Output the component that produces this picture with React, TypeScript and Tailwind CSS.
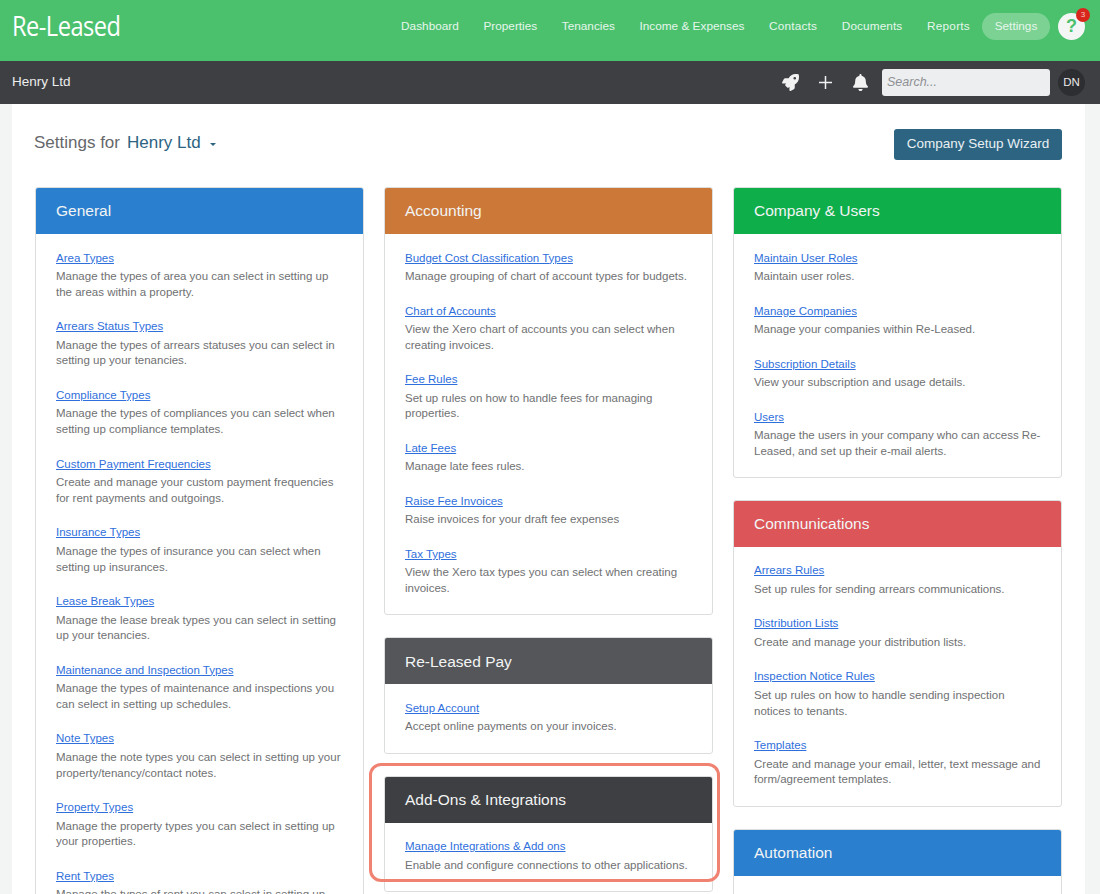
import React from "react";
import { FaRocket, FaBell } from "react-icons/fa";

type Item = [string, string];

const general: Item[] = [
  ["Area Types", "Manage the types of area you can select in setting up\nthe areas within a property."],
  ["Arrears Status Types", "Manage the types of arrears statuses you can select in\nsetting up your tenancies."],
  ["Compliance Types", "Manage the types of compliances you can select when\nsetting up compliance templates."],
  ["Custom Payment Frequencies", "Create and manage your custom payment frequencies\nfor rent payments and outgoings."],
  ["Insurance Types", "Manage the types of insurance you can select when\nsetting up insurances."],
  ["Lease Break Types", "Manage the lease break types you can select in setting\nup your tenancies."],
  ["Maintenance and Inspection Types", "Manage the types of maintenance and inspections you\ncan select in setting up schedules."],
  ["Note Types", "Manage the note types you can select in setting up your\nproperty/tenancy/contact notes."],
  ["Property Types", "Manage the property types you can select in setting up\nyour properties."],
  ["Rent Types", "Manage the types of rent you can select in setting up"],
];
const accounting: Item[] = [
  ["Budget Cost Classification Types", "Manage grouping of chart of account types for budgets."],
  ["Chart of Accounts", "View the Xero chart of accounts you can select when\ncreating invoices."],
  ["Fee Rules", "Set up rules on how to handle fees for managing\nproperties."],
  ["Late Fees", "Manage late fees rules."],
  ["Raise Fee Invoices", "Raise invoices for your draft fee expenses"],
  ["Tax Types", "View the Xero tax types you can select when creating\ninvoices."],
];
const company: Item[] = [
  ["Maintain User Roles", "Maintain user roles."],
  ["Manage Companies", "Manage your companies within Re-Leased."],
  ["Subscription Details", "View your subscription and usage details."],
  ["Users", "Manage the users in your company who can access Re-\nLeased, and set up their e-mail alerts."],
];
const comms: Item[] = [
  ["Arrears Rules", "Set up rules for sending arrears communications."],
  ["Distribution Lists", "Create and manage your distribution lists."],
  ["Inspection Notice Rules", "Set up rules on how to handle sending inspection\nnotices to tenants."],
  ["Templates", "Create and manage your email, letter, text message and\nform/agreement templates."],
];

const nav: [string, string][] = [
  ["Dashboard", ""],
  ["Properties", ""],
  ["Tenancies", ""],
  ["Income & Expenses", ""],
  ["Contacts", "tracking-[0.2px]"],
  ["Documents", "tracking-[0.1px]"],
  ["Reports", "tracking-[0.25px]"],
];

function Panel({ title, color, items, extra }: { title: string; color: string; items: Item[]; extra?: string }) {
  return (
    <div className={`shrink-0 overflow-hidden rounded-[3px] border border-[#dcdedd] bg-white ${extra ?? ""}`}>
      <div className={`flex h-[46px] items-center px-5 text-[15.5px] text-[#f2f4f4] ${color}`}>{title}</div>
      {items.length > 0 && (
        <div className="flex flex-col gap-[16.8px] px-5 pb-[17.5px] pt-[14.5px]">
          {items.map(([t, d]) => (
            <div key={t}>
              <div className="text-[11.5px] leading-[18px] text-[#2f6fdc] underline">{t}</div>
              <div className="mt-[2.5px] whitespace-pre-line text-[11.5px] leading-[15.7px] text-[#707173]">{d}</div>
            </div>
          ))}
        </div>
      )}
    </div>
  );
}

export default function App() {
  return (
    <div
      className="flex h-[894px] w-[1100px] flex-col overflow-hidden bg-[#f3f5f4]"
      style={{ fontFamily: '"Liberation Sans", Arial, sans-serif' }}
    >
      <header className="flex h-[61px] shrink-0 items-center bg-[#4bc16e] pb-[8px] pl-3 pr-[15px]">
        <div
          className="origin-left -translate-y-px scale-x-[0.875] text-[27px] leading-none tracking-[-0.6px] text-white"
          style={{ fontFamily: '"Open Sans", sans-serif', fontWeight: 400 }}
        >
          Re-Leased
        </div>
        <nav className="ml-auto flex items-center text-[11.8px] text-[#e6f6eb]">
          <div className="flex gap-[24.6px] pr-[12px]">
            {nav.map(([n, c]) => (
              <span key={n} className={c}>{n}</span>
            ))}
          </div>
          <span className="flex h-[27px] w-[68px] items-center justify-center rounded-full bg-[#7bd293]">Settings</span>
          <div className="relative ml-2 flex h-[27px] w-[27px] items-center justify-center rounded-full bg-[#f4f6f5] text-[18px] font-bold text-[#4bc16e]">
            ?
            <span className="absolute -right-[5px] -top-[5px] flex h-[14px] w-[14px] items-center justify-center rounded-full bg-[#d9261c] text-[8px] font-normal text-[#f8c9c5]">
              3
            </span>
          </div>
        </nav>
      </header>

      <div className="flex h-[43px] shrink-0 items-center bg-[#3e3f43] pl-3 pr-[15px] text-[13.5px] text-[#eceded]">
        <span>Henry Ltd</span>
        <div className="ml-auto flex items-center">
          <FaRocket size={17} color="#f2f2f2" className="mr-[20px]" />
          <svg width="13" height="13" viewBox="0 0 13 13" stroke="#f2f2f2" strokeWidth="1.5" className="mr-[20px]">
            <path d="M6.500 0v13M0 6.500h13" />
          </svg>
          <FaBell size={17} color="#f2f2f2" className="mr-[13px]" />
          <div className="flex h-[27px] w-[168px] items-center rounded-[3px] bg-[#eceef0] px-[5px] text-[12.5px] italic text-[#8f9094]">Search...</div>
          <div className="ml-2 flex h-[27px] w-[27px] items-center justify-center rounded-full bg-[#2d2e31] text-[11.5px] text-[#e8e8e8]">DN</div>
        </div>
      </div>

      <main className="ml-3 mr-[15px] flex-1 overflow-hidden bg-white pl-[23px] pr-[23px]">
        <div className="flex h-[83px] items-start justify-between pt-[25px]">
          <div className="-ml-px flex items-center pt-[1px] text-[17px]">
            <span className="text-[#66686b]">Settings for</span>
            <span className="ml-[7px] text-[#2c6482]">Henry Ltd</span>
            <span className="ml-[9px] mt-[3px] h-0 w-0 border-x-[3.500px] border-t-[3.500px] border-x-transparent border-t-[#2c6482]" />
          </div>
          <div className="flex h-[31px] w-[168px] items-center justify-center rounded-[3px] bg-[#2c6482] text-[13.500px] text-[#e9f0f3]">
            Company Setup Wizard
          </div>
        </div>
        <div className="grid grid-cols-[329px_329px_329px] gap-x-5">
          <div className="flex flex-col">
            <Panel title="General" color="bg-[#2a7fcf]" items={general} />
          </div>
          <div className="flex flex-col gap-[22px]">
            <Panel title="Accounting" color="bg-[#cc7838]" items={accounting} />
            <Panel title="Re-Leased Pay" color="bg-[#55565a]" items={[["Setup Account", "Accept online payments on your invoices."]]} />
            <div className="relative">
              <Panel title="Add-Ons & Integrations" color="bg-[#3e3f43]" items={[["Manage Integrations & Add ons", "Enable and configure connections to other applications."]]} />
              <div className="absolute -left-[15px] -right-[7px] -top-[13px] h-[119px] rounded-[12px] border-[3px] border-[#f08272]" />
            </div>
          </div>
          <div className="flex flex-col gap-[22px]">
            <Panel title="Company & Users" color="bg-[#0eae4b]" items={company} />
            <Panel title="Communications" color="bg-[#dc5558]" items={comms} />
            <Panel title="Automation" color="bg-[#2a7fcf]" items={[]} extra="h-[100px]" />
          </div>
        </div>
      </main>
    </div>
  );
}
